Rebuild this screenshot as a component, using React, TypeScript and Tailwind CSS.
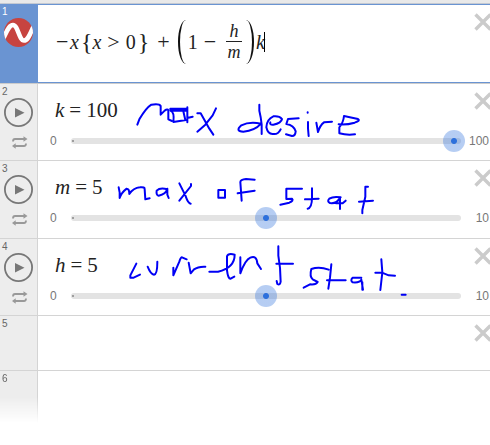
import { useState, type ReactNode } from "react";

const serif = "font-['Liberation_Serif','Times_New_Roman',serif]";
const ink = "#0000f5";

function CloseButton({ label }: { label: string }) {
  return (
    <button type="button" aria-label={label} className="-mr-0.5 ml-auto h-[18px] w-[18px] shrink-0 text-[#cbcbcb]">
      <svg viewBox="0 0 18 18" className="h-[18px] w-[18px]" fill="none" stroke="currentColor" strokeWidth="3.4">
        <path d="M1.5 1.5 16.5 16.5M16.5 1.5 1.5 16.5" />
      </svg>
    </button>
  );
}

function Gutter({ index, children }: { index: number; children?: ReactNode }) {
  return (
    <div className="flex w-[38px] shrink-0 flex-col border-r border-[#d4d4d4] bg-[#ededed] pt-0.5">
      <span className="pl-0.5 text-[10px] leading-3 text-[#666]">{index}</span>
      {children}
    </div>
  );
}

function GraphBadge() {
  return (
    <svg viewBox="0 0 30 30" className="h-[30px] w-[30px]">
      <defs>
        <clipPath id="badge">
          <circle cx="14.5" cy="14.5" r="14.5" />
        </clipPath>
      </defs>
      <circle cx="14.5" cy="14.5" r="14.5" fill="#c74440" />
      <path
        d="M-1 21C3 13 5 7 9 7C14 7 15 22.500 20 22.500C24.500 22.500 26 15 30 8"
        fill="none"
        stroke="#fff"
        strokeWidth="4.600"
        clipPath="url(#badge)"
      />
    </svg>
  );
}

function PlayIcon() {
  return (
    <svg viewBox="0 0 30 30" className="h-[30px] w-[30px]">
      <circle cx="14.5" cy="14.5" r="13.6" fill="none" stroke="#777" strokeWidth="1.800" />
      <path d="M11 10V19.500L20.500 14.800Z" fill="#777" />
    </svg>
  );
}

function LoopIcon() {
  return (
    <svg viewBox="0 0 16 14" className="h-3.5 w-4" fill="none" stroke="#999" strokeWidth="1.800">
      <path d="M1 5.500Q1 3 3 3H13M14 7.500Q14 10 12 10H2" />
      <path d="M11.500 0.300 15.500 3 11.500 5.700ZM3.700 7.300 0 10 3.700 12.700Z" fill="#999" stroke="none" />
    </svg>
  );
}

type SliderProps = { index: number; name: string; initial: number; max: number };

function SliderRow({ index, name, initial, max }: SliderProps) {
  const [value, setValue] = useState(initial);
  return (
    <div className="flex border-b border-[#d4d4d4]">
      <Gutter index={index}>
        <button type="button" aria-label={`Animate ${name}`} className="ml-1 h-[30px] w-[30px]">
          <PlayIcon />
        </button>
        <button type="button" aria-label={`Loop mode of ${name}`} className="mt-2 ml-3 h-3.5 w-4">
          <LoopIcon />
        </button>
      </Gutter>
      <div className="min-w-0 flex-1">
        <div className="flex h-[46px] pt-2">
          <label htmlFor={`slider-${name}`} className={`flex gap-[5px] pt-1.5 pl-[17px] text-[21px] leading-6 text-[#222] ${serif}`}>
            <i>{name}</i>
            <span>=</span>
            <span>{value}</span>
          </label>
          <CloseButton label={`Delete expression ${index}`} />
        </div>
        <div className="flex h-[22px] items-center text-[12px] text-[#777]">
          <span className="w-[29px] shrink-0 pl-3">0</span>
          <div className="grid min-w-0 flex-1 items-center">
            <span className="col-start-1 row-start-1 mx-1 flex h-1.5 items-center rounded-full bg-[#e3e3e3] pl-px">
              <span className="h-0.5 w-0.5 rounded-full bg-[#888]" />
            </span>
            <input
              id={`slider-${name}`}
              type="range"
              min={0}
              max={max}
              value={value}
              onChange={(e) => setValue(Number(e.target.value))}
              className="col-start-1 row-start-1 h-[22px] w-full appearance-none bg-transparent [&::-webkit-slider-thumb]:h-[22px] [&::-webkit-slider-thumb]:w-[22px] [&::-webkit-slider-thumb]:appearance-none [&::-webkit-slider-thumb]:rounded-full [&::-webkit-slider-thumb]:bg-[radial-gradient(circle,#2d70dc_2.5px,rgba(45,112,220,0.35)_3.5px)]"
            />
          </div>
          <span className="w-[25px] shrink-0 pr-px text-right">{max}</span>
        </div>
      </div>
    </div>
  );
}

function Formula() {
  return (
    <div
      role="textbox"
      aria-label="-x{x>0}+(1-h/m)k"
      tabIndex={0}
      className={`flex h-full items-center pb-1 pl-[18px] text-[20px] leading-6 text-[#222] outline-none ${serif}`}
    >
      <span className="w-3.5 text-[22px]">−</span>
      <i>x</i>
      <span className="ml-0.5 text-[24px]">{"{"}</span>
      <i>x</i>
      <span className="mx-1.5 text-[22px]">&gt;</span>
      <span>0</span>
      <span className="ml-0.5 text-[24px]">{"}"}</span>
      <span className="mr-2 ml-2 text-[22px]">+</span>
      <span className="h-11 w-2 rounded-[100%_0_0_100%/50%_0_0_50%] border-l-2 border-[#111]" />
      <span className="ml-0.5">1</span>
      <span className="mx-1.5 text-[22px]">−</span>
      <span className="ml-1 flex w-4 flex-col items-center text-[18px] leading-5 italic">
        <span>h</span>
        <span className="w-full border-t border-[#222] text-center">m</span>
      </span>
      <span className="ml-1 h-11 w-2 rounded-[0_100%_100%_0/0_50%_50%_0] border-r-2 border-[#111]" />
      <i className="ml-0.5">k</i>
      <span className="-ml-px h-5 w-px bg-black" />
    </div>
  );
}

function Handwriting() {
  return (
    <svg
      role="img"
      aria-label="max desire, max of stat, current stat."
      viewBox="0 0 490 445"
      className="pointer-events-none absolute top-0 left-0 h-[445px] w-[490px]"
      fill="none"
      stroke={ink}
      strokeWidth="6"
      strokeLinecap="round"
      strokeLinejoin="round"
    >
      <g transform="translate(130 90) scale(.33333)">
        <path d="M22 104 28 88Q48 54 64 44Q88 40 92 48V74L104 62Q113 56 115 61V88L126 93" />
        <path d="M168 56H121V62H172M121 62Q134 66 130 96L168 90M172 52V97M160 64 166 90M172 84 188 80" />
        <path d="M202 70H212L238 116 250 134M258 55 248 76 226 104 202 125" />
      </g>
      <g transform="translate(230 90) scale(.33333)">
        <path d="M88 44V62Q93 82 95 104V132M93 101Q58 94 34 106Q14 124 40 125Q75 122 93 101" />
        <path d="M121 97Q118 105 130 104Q154 99 156 87Q148 77 130 79Q110 88 109 112Q114 134 130 132Q144 134 152 118" />
        <path d="M206 85 174 87 169 102Q192 106 197 124Q196 138 186 138L168 133" />
        <path d="M234 96V115L236 138M233 67V68M259 98 264 126Q270 106 282 97L306 95" />
        <path d="M326 103Q350 105 374 98Q392 92 384 87L342 78Q340 98 328 112V130Q350 136 375 133" />
      </g>
      <g transform="translate(110 160) scale(.33333)">
        <path d="M26 82 29 98V114Q34 98 50 86Q58 86 58 102Q70 84 90 82Q105 80 104 88L106 118 119 115" />
        <path d="M172 88Q150 82 140 92Q138 106 146 107Q168 102 172 86V104L176 114" />
        <path d="M208 70 226 106Q234 130 242 131M243 72V78L208 122M325 90V113H345V90Z" />
        <path d="M434 59 408 57Q392 58 391 66L395 122M383 100 434 92" />
      </g>
      <g transform="translate(250 160) scale(.33333)">
        <path d="M156 86H109V117L126 116Q132 122 118 128L91 134M186 85V112Q186 144 173 146M165 118 206 116" />
        <path d="M272 112Q250 108 238 116Q230 124 240 129Q260 132 270 113V147M258 130H278L287 122" />
        <path d="M354 80H346V110L337 150V160M327 125 369 122" />
      </g>
      <g transform="translate(120 235) scale(.33333)">
        <path d="M49 86 31 121V128H41L60 119M83 95Q92 118 102 119Q112 118 112 80" />
        <path d="M160 98V121L178 80Q182 67 186 67L200 73M206 83 212 115 222 103Q234 94 256 95" />
        <path d="M268 110H294Q344 98 344 59Q324 54 321 64V106Q324 132 332 131L343 125M361 67V115Q376 74 391 68Q410 60 412 85L423 102" />
      </g>
      <g transform="translate(260 235) scale(.33333)">
        <path d="M55 34V62Q62 100 62 140Q60 152 52 147L50 138M49 86H99" />
        <path d="M206 104Q178 94 154 102Q148 124 158 133L173 141Q168 150 150 148L131 158M214 88 210 128 205 161M201 136H257" />
        <path d="M304 128H278Q270 136 278 142Q300 144 304 134L309 164M307 142V164M364 73 367 112 361 165M346 113H366L386 121 405 122M425 179H437" />
      </g>
    </svg>
  );
}

export default function App() {
  return (
    <main className="relative overflow-hidden bg-white font-['Liberation_Sans',Arial,sans-serif]">
      <div className="h-1 border-b border-[#c4c9d2] bg-[#e9e9e9]" />
      <section className="flex h-20 border-b border-[#ccc]">
        <div className="flex w-[38px] shrink-0 flex-col bg-[#6a94d2] pt-0.5">
          <span className="pl-0.5 text-[10px] leading-3 text-white">1</span>
          <div className="ml-1">
            <GraphBadge />
          </div>
        </div>
        <div className="flex min-w-0 flex-1 border-y border-[#6a94d2]">
          <Formula />
          <div className="ml-auto pt-2">
            <CloseButton label="Delete expression 1" />
          </div>
        </div>
      </section>
      <section className="grid h-[232px] grid-rows-3">
        <SliderRow index={2} name="k" initial={100} max={100} />
        <SliderRow index={3} name="m" initial={5} max={10} />
        <SliderRow index={4} name="h" initial={5} max={10} />
      </section>
      <section className="flex h-[55px] border-b border-[#d4d4d4]">
        <Gutter index={5} />
        <div className="flex flex-1 pt-2">
          <CloseButton label="Delete expression 5" />
        </div>
      </section>
      <section className="flex h-[52px] [mask-image:linear-gradient(to_bottom,black_50%,transparent)]">
        <Gutter index={6} />
      </section>
      <Handwriting />
    </main>
  );
}
